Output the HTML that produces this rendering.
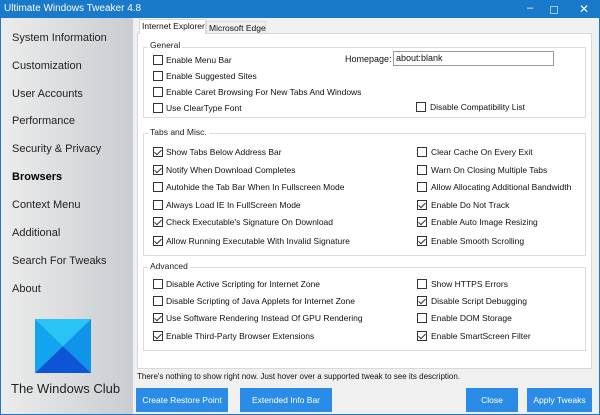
<!DOCTYPE html>
<html><head><meta charset="utf-8"><style>
*{margin:0;padding:0;box-sizing:border-box}
body{width:600px;height:415px;overflow:hidden;font-family:"Liberation Sans",sans-serif;background:#fff;position:relative;color:#111}
.a{position:absolute;white-space:nowrap}
#win{position:absolute;left:0;top:0;width:600px;height:415px;border:1px solid #1979ca}
#title{position:absolute;left:0;top:0;width:600px;height:18px;background:#1979ca;color:#fff;font-size:10px;line-height:18px;padding-left:4px}
#side{position:absolute;left:1px;top:18px;width:132px;height:396px;background:linear-gradient(90deg,#ececec,#c9cdd1)}
.nav{position:absolute;left:11px;font-size:11px;color:#222}
#main{position:absolute;left:133px;top:18px;width:466px;height:396px;background:#f0f0f0}
.tabpanel{position:absolute;left:137px;top:33px;width:455px;height:336px;background:#fff;border:1px solid #d9d9d9}
.grp{position:absolute;border:1px solid #dcdcdc}
.gl{position:absolute;font-size:8.5px;background:#fff;padding:0 2px;color:#222}
.cb{position:absolute;width:10px;height:10px;border:1px solid #333;background:#fff}
.cb.c::after{content:"";position:absolute;left:2px;top:0px;width:3px;height:6px;border:solid #333;border-width:0 1px 1px 0;transform:rotate(45deg)}
.t{position:absolute;font-size:8.5px;color:#111;white-space:nowrap}
.btn{position:absolute;top:388px;height:24px;background:#2b8ce8;color:#fff;font-size:8.5px;line-height:24px;text-align:center}
</style></head><body>
<div id="win"></div>
<div id="title">Ultimate Windows Tweaker 4.8
<span class="a" style="left:527px;top:-1px;font-size:11px">–</span>
<span class="a" style="left:550px;top:6px;width:8px;height:8px;border:1px solid #9cc6ea"></span>
<span class="a" style="left:579px;top:0;font-size:12px">✕</span></div>
<div id="side">
<div class="nav" style="top:14px">System Information</div>
<div class="nav" style="top:42px">Customization</div>
<div class="nav" style="top:70px">User Accounts</div>
<div class="nav" style="top:97px">Performance</div>
<div class="nav" style="top:125px">Security &amp; Privacy</div>
<div class="nav" style="top:153px;font-weight:bold;color:#000">Browsers</div>
<div class="nav" style="top:181px">Context Menu</div>
<div class="nav" style="top:209px">Additional</div>
<div class="nav" style="top:237px">Search For Tweaks</div>
<div class="nav" style="top:265px">About</div>
<svg class="a" style="left:34px;top:301px" width="56" height="54" viewBox="0 0 56 54">
<polygon points="0,0 56,0 28,27" fill="#27c4f5"/>
<polygon points="0,0 28,27 0,54" fill="#12a4ef"/>
<polygon points="56,0 28,27 56,54" fill="#0e95ea"/>
<polygon points="0,54 28,27 56,54" fill="#0b55d6"/>
</svg>
<div class="nav" style="top:363px;left:10px;font-size:13px">The Windows Club</div>
</div>
<div id="main"></div>
<div class="tabpanel"></div>
<div class="a" style="left:139px;top:19px;width:67px;height:15px;background:#fff;border:1px solid #d9d9d9;border-bottom:none;font-size:8.5px;line-height:13px;padding-left:2px">Internet Explorer</div>
<div class="a" style="left:206px;top:21px;width:60px;height:12px;background:#f0f0f0;border:1px solid #d9d9d9;border-bottom:none;font-size:8.5px;line-height:12px;padding-left:2px">Microsoft Edge</div>

<div class="grp" style="left:143px;top:47px;width:443px;height:71px"></div>
<div class="gl" style="left:148px;top:40px">General</div>
<div class="cb" style="left:153px;top:55px"></div><div class="t" style="left:166px;top:55px">Enable Menu Bar</div>
<div class="cb" style="left:153px;top:71px"></div><div class="t" style="left:166px;top:71px">Enable Suggested Sites</div>
<div class="cb" style="left:153px;top:87px"></div><div class="t" style="left:166px;top:87px">Enable Caret Browsing For New Tabs And Windows</div>
<div class="cb" style="left:153px;top:103px"></div><div class="t" style="left:166px;top:103px">Use ClearType Font</div>
<div class="t" style="left:345px;top:54px;font-size:9px">Homepage:</div>
<div class="a" style="left:393px;top:51px;width:161px;height:15px;border:1px solid #999;font-size:9px;line-height:13px;padding-left:2px">about:blank</div>
<div class="cb" style="left:416px;top:102px"></div><div class="t" style="left:430px;top:102px">Disable Compatibility List</div>

<div class="grp" style="left:143px;top:133px;width:443px;height:123px"></div>
<div class="gl" style="left:148px;top:127px">Tabs and Misc.</div>
<div class="cb c" style="left:153px;top:147px"></div><div class="t" style="left:166px;top:147px">Show Tabs Below Address Bar</div>
<div class="cb c" style="left:153px;top:165px"></div><div class="t" style="left:166px;top:165px">Notify When Download Completes</div>
<div class="cb" style="left:153px;top:182px"></div><div class="t" style="left:166px;top:182px">Autohide the Tab Bar When In Fullscreen Mode</div>
<div class="cb" style="left:153px;top:200px"></div><div class="t" style="left:166px;top:200px">Always Load IE In FullScreen Mode</div>
<div class="cb c" style="left:153px;top:217px"></div><div class="t" style="left:166px;top:217px">Check Executable's Signature On Download</div>
<div class="cb c" style="left:153px;top:236px"></div><div class="t" style="left:166px;top:236px">Allow Running Executable With Invalid Signature</div>
<div class="cb" style="left:417px;top:147px"></div><div class="t" style="left:431px;top:147px">Clear Cache On Every Exit</div>
<div class="cb" style="left:417px;top:165px"></div><div class="t" style="left:431px;top:165px">Warn On Closing Multiple Tabs</div>
<div class="cb" style="left:417px;top:182px"></div><div class="t" style="left:431px;top:182px">Allow Allocating Additional Bandwidth</div>
<div class="cb c" style="left:417px;top:200px"></div><div class="t" style="left:431px;top:200px">Enable Do Not Track</div>
<div class="cb c" style="left:417px;top:217px"></div><div class="t" style="left:431px;top:217px">Enable Auto Image Resizing</div>
<div class="cb c" style="left:417px;top:236px"></div><div class="t" style="left:431px;top:236px">Enable Smooth Scrolling</div>

<div class="grp" style="left:143px;top:267px;width:443px;height:84px"></div>
<div class="gl" style="left:148px;top:261px">Advanced</div>
<div class="cb" style="left:153px;top:279px"></div><div class="t" style="left:166px;top:279px">Disable Active Scripting for Internet Zone</div>
<div class="cb" style="left:153px;top:296px"></div><div class="t" style="left:166px;top:296px">Disable Scripting of Java Applets for Internet Zone</div>
<div class="cb c" style="left:153px;top:313px"></div><div class="t" style="left:166px;top:313px">Use Software Rendering Instead Of GPU Rendering</div>
<div class="cb c" style="left:153px;top:331px"></div><div class="t" style="left:166px;top:331px">Enable Third-Party Browser Extensions</div>
<div class="cb" style="left:417px;top:279px"></div><div class="t" style="left:431px;top:279px">Show HTTPS Errors</div>
<div class="cb c" style="left:417px;top:296px"></div><div class="t" style="left:431px;top:296px">Disable Script Debugging</div>
<div class="cb" style="left:417px;top:313px"></div><div class="t" style="left:431px;top:313px">Enable DOM Storage</div>
<div class="cb c" style="left:417px;top:331px"></div><div class="t" style="left:431px;top:331px">Enable SmartScreen Filter</div>

<div class="t" style="left:137px;top:372px;font-size:8px">There's nothing to show right now. Just hover over a supported tweak to see its description.</div>
<div class="btn" style="left:136px;width:92px">Create Restore Point</div>
<div class="btn" style="left:240px;width:92px">Extended Info Bar</div>
<div class="btn" style="left:466px;width:52px">Close</div>
<div class="btn" style="left:527px;width:65px">Apply Tweaks</div>
</body></html>
